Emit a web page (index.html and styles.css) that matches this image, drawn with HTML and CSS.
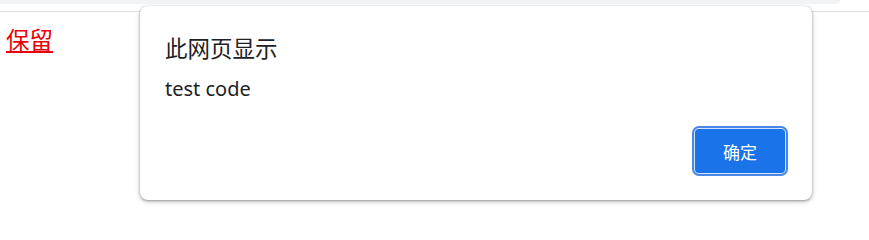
FILE: index.html
```html
<!DOCTYPE html>
<html lang="zh-CN">
<head>
<meta charset="utf-8">
<title>alert</title>
<link rel="stylesheet" href="styles.css">
</head>
<body>
<div class="chrome">
  <div class="omnibox"></div>
</div>
<main class="page">
  <a class="keep" href="#">保留</a>
</main>
<div class="dialog" role="alertdialog">
  <div class="title">此网页显示</div>
  <div class="message">test code</div>
  <div class="actions">
    <button class="ok">确定</button>
  </div>
</div>
</body>
</html>
```
FILE: styles.css
```css
html, body {
  margin: 0;
  padding: 0;
  background: #fff;
}
body {
  width: 869px;
  height: 213px;
  overflow: hidden;
  position: relative;
  font-family: "Noto Sans", "Noto Sans CJK SC", sans-serif;
}
.chrome {
  height: 11px;
  border-bottom: 1px solid #dcdcdc;
  background: #fff;
}
.omnibox {
  width: 840px;
  height: 4px;
  background: #f1f3f4;
  border-bottom-right-radius: 6px;
}
.page {
  padding: 12px 0 0 6px;
}
.keep {
  font-family: "Noto Sans CJK SC", sans-serif;
  font-size: 23.5px;
  line-height: 30px;
  color: #e8000b;
  text-decoration: underline;
  text-underline-offset: 2px;
}
.dialog {
  position: absolute;
  left: 140px;
  top: 6px;
  width: 672px;
  height: 194px;
  box-sizing: border-box;
  background: #fff;
  border-radius: 8px;
  box-shadow: 0 1px 3px rgba(0,0,0,0.38), 0 2px 6px rgba(0,0,0,0.12);
  padding: 26px 24px 0 25px;
  display: flex;
  flex-direction: column;
}
.title {
  font-family: "Noto Sans CJK SC", sans-serif;
  font-size: 22.5px;
  line-height: 30px;
  color: #202124;
}
.message {
  margin-top: 13px;
  font-family: "Noto Sans", "Noto Sans CJK SC", sans-serif;
  font-size: 20px;
  line-height: 28px;
  color: #202124;
}
.actions {
  margin-top: 26px;
  display: flex;
  justify-content: flex-end;
}
.ok {
  width: 90px;
  height: 44px;
  margin-right: 3px;
  border: none;
  border-radius: 4px;
  background: #1a73e8;
  color: #fff;
  font-family: "Noto Sans CJK SC", sans-serif;
  font-size: 17px;
  box-shadow: 0 0 0 1px #d2e3fc, 0 0 0 3px #4a86e8;
}
```
